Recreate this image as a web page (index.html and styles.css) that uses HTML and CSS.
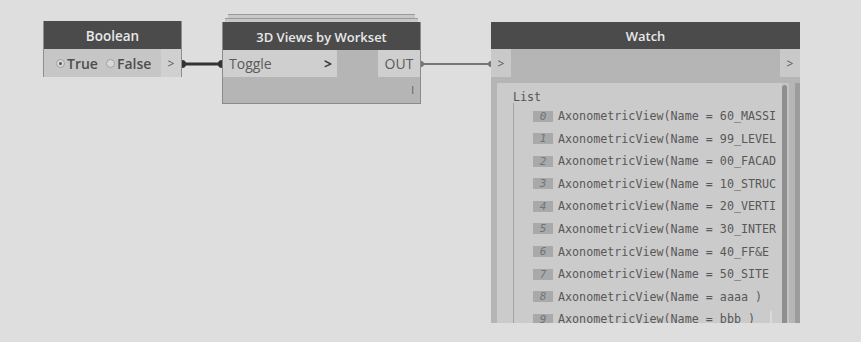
FILE: index.html
```html
<!DOCTYPE html>
<html>
<head>
<meta charset="utf-8">
<link rel="stylesheet" href="styles.css">
</head>
<body>
<div class="canvas">
  <svg class="wires" width="861" height="342">
    <line x1="182" y1="64" x2="222" y2="64" stroke="#333" stroke-width="3"/>
    <path d="M182 60 a4 4 0 0 1 0 8 z" fill="#333"/>
    <path d="M222 60 a4 4 0 0 0 0 8 z" fill="#333"/>
    <line x1="421" y1="64" x2="491" y2="64" stroke="#767676" stroke-width="2.2"/>
    <path d="M421 61 a3 3 0 0 1 0 6 z" fill="#767676"/>
    <path d="M491 61 a3 3 0 0 0 0 6 z" fill="#767676"/>
  </svg>

  <div class="node node-bool">
    <div class="node-head">Boolean</div>
    <div class="node-row">
      <div class="radios">
        <span class="radio"><span class="dot on"></span>True</span>
        <span class="radio"><span class="dot"></span>False</span>
      </div>
      <div class="port port-out small">&gt;</div>
    </div>
  </div>

  <div class="node node-views">
    <div class="stack stack1"></div>
    <div class="stack stack2"></div>
    <div class="node-head">3D Views by Workset</div>
    <div class="node-row">
      <div class="port port-in wide"><span>Toggle</span><span class="chev">&gt;</span></div>
      <div class="gap"></div>
      <div class="port port-out">OUT</div>
    </div>
    <div class="node-foot"><span class="lace">I</span></div>
  </div>

  <div class="node node-watch">
    <div class="node-head">Watch</div>
    <div class="node-row">
      <div class="port port-in tiny">&gt;</div>
      <div class="gap"></div>
      <div class="port port-out tiny">&gt;</div>
    </div>
    <div class="watch-body">
      <div class="panel">
        <div class="list-title">List</div>
        <div class="list">
          <div class="item"><span class="idx">0</span><span class="val">AxonometricView(Name = 60_MASSI</span></div>
          <div class="item"><span class="idx">1</span><span class="val">AxonometricView(Name = 99_LEVEL</span></div>
          <div class="item"><span class="idx">2</span><span class="val">AxonometricView(Name = 00_FACAD</span></div>
          <div class="item"><span class="idx">3</span><span class="val">AxonometricView(Name = 10_STRUC</span></div>
          <div class="item"><span class="idx">4</span><span class="val">AxonometricView(Name = 20_VERTI</span></div>
          <div class="item"><span class="idx">5</span><span class="val">AxonometricView(Name = 30_INTER</span></div>
          <div class="item"><span class="idx">6</span><span class="val">AxonometricView(Name = 40_FF&amp;E</span></div>
          <div class="item"><span class="idx">7</span><span class="val">AxonometricView(Name = 50_SITE</span></div>
          <div class="item"><span class="idx">8</span><span class="val">AxonometricView(Name = aaaa )</span></div>
          <div class="item"><span class="idx">9</span><span class="val">AxonometricView(Name = bbb )</span></div>
        </div>
        <div class="inner-scroll"></div>
      </div>
      <div class="scroll"><div class="thumb"></div></div>
      <div class="edge"></div>
    </div>
  </div>
</div>
</body>
</html>
```

FILE: styles.css
```css
html, body {
  margin: 0;
  padding: 0;
  background: #dedede;
}
.canvas {
  position: relative;
  width: 861px;
  height: 342px;
  overflow: hidden;
  background: #dedede;
  font-family: "Open Sans", "Noto Sans", sans-serif;
}
.wires {
  position: absolute;
  left: 0;
  top: 0;
}
.node {
  position: absolute;
  box-sizing: border-box;
  background: #b5b5b5;
  display: flex;
  flex-direction: column;
}
.node-head {
  background: #4b4b4b;
  color: #e8e8e8;
  font-weight: 600;
  font-size: 13px;
  display: flex;
  align-items: center;
  justify-content: center;
  flex: none;
}
.node-row {
  display: flex;
  flex: none;
}
.port {
  background: #cfcfcf;
  color: #5a5a5a;
  display: flex;
  align-items: center;
  box-sizing: border-box;
}
.gap { flex: 1; }

/* Boolean */
.node-bool {
  left: 43px;
  top: 21px;
  width: 139px;
  height: 56px;
  border: 1px solid #8e8e8e;
  border-top: none;
}
.node-bool .node-head { height: 27px; padding-top: 1px; font-size: 13.5px; }
.node-bool .node-row { height: 28px; background: #c6c6c6; }
.radios {
  flex: 1;
  display: flex;
  align-items: center;
  gap: 8px;
  padding-left: 12px;
  font-size: 14px;
  font-weight: 600;
  color: #4e4e4e;
}
.radio { display: flex; align-items: center; gap: 2px; }
.dot {
  width: 9px;
  height: 9px;
  border-radius: 50%;
  background: #d8d8d8;
  border: 1px solid #a0a0a0;
  box-sizing: border-box;
  position: relative;
}
.dot.on::after {
  content: "";
  position: absolute;
  left: 2px;
  top: 2px;
  width: 3px;
  height: 3px;
  border-radius: 50%;
  background: #555;
}
.port.small {
  width: 20px;
  justify-content: center;
  font-size: 12px;
  background: #d0d0d0;
}

/* 3D Views */
.node-views {
  left: 222px;
  top: 22px;
  width: 199px;
  height: 82px;
  border: 1px solid #8a8a8a;
  border-top: none;
}
.stack {
  position: absolute;
  height: 3px;
  background: #c8c8c8;
  border-top: 1px solid #9a9a9a;
}
.stack1 { left: 5px; right: 5px; top: -8px; }
.stack2 { left: 2px; right: 2px; top: -4px; }
.node-views .node-head { height: 28px; padding-top: 1px; box-sizing: border-box; }
.node-views .node-row { height: 27px; }
.port.wide {
  width: 114px;
  padding-left: 6px;
  padding-right: 5px;
  justify-content: space-between;
  font-size: 14px;
}
.chev {
  font-weight: 700;
  color: #3c3c3c;
  font-size: 14px;
}
.node-views .port-out {
  width: 42px;
  justify-content: center;
  font-size: 14px;
}
.node-foot {
  flex: 1;
  display: flex;
  justify-content: flex-end;
  align-items: center;
  padding-right: 6px;
}
.lace {
  font-size: 10px;
  color: #555;
  font-weight: 400;
}

/* Watch */
.node-watch {
  left: 491px;
  top: 22px;
  width: 309px;
  height: 301px;
}
.node-watch .node-head { height: 27px; padding-top: 1px; box-sizing: border-box; }
.node-watch .node-row { height: 28px; }
.port.tiny {
  width: 20px;
  justify-content: center;
  font-size: 12px;
  background: #c9c9c9;
}
.watch-body {
  flex: 1;
  display: flex;
  padding: 6px 0 0 6px;
  min-height: 0;
}
.panel {
  position: relative;
  width: 285px;
  background: #cbcbcb;
  overflow: hidden;
  font-family: "DejaVu Sans Mono", "Liberation Mono", monospace;
  font-size: 11.7px;
  color: #585858;
  padding: 8px 0 0 16px;
  box-sizing: border-box;
}
.list-title {
  line-height: 12px;
  color: #555;
}
.list {
  border-left: 1px solid #a3a3a3;
  padding-left: 19px;
  padding-top: 6px;
  display: flex;
  flex-direction: column;
  gap: 8.6px;
}
.item {
  display: flex;
  align-items: center;
  white-space: nowrap;
  height: 14px;
  gap: 5px;
}
.idx {
  width: 20px;
  height: 11px;
  background: #a9a9a9;
  color: #747474;
  font-style: italic;
  font-size: 11px;
  line-height: 11px;
  text-align: center;
  flex: none;
}
.val {
  flex: none;
}
.inner-scroll {
  position: absolute;
  left: 273px;
  bottom: 0;
  width: 2px;
  height: 12px;
  background: #dadada;
}
.scroll {
  width: 7px;
  background: #c4c4c4;
  position: relative;
}
.thumb {
  position: absolute;
  left: 0;
  top: 2px;
  width: 5px;
  bottom: 0;
  background: #8f8f8f;
  border-radius: 3px 3px 0 0;
}
.edge {
  width: 11px;
  background: linear-gradient(to right, #b6b6b6 0 6px, #9c9c9c 6px);
}
```
